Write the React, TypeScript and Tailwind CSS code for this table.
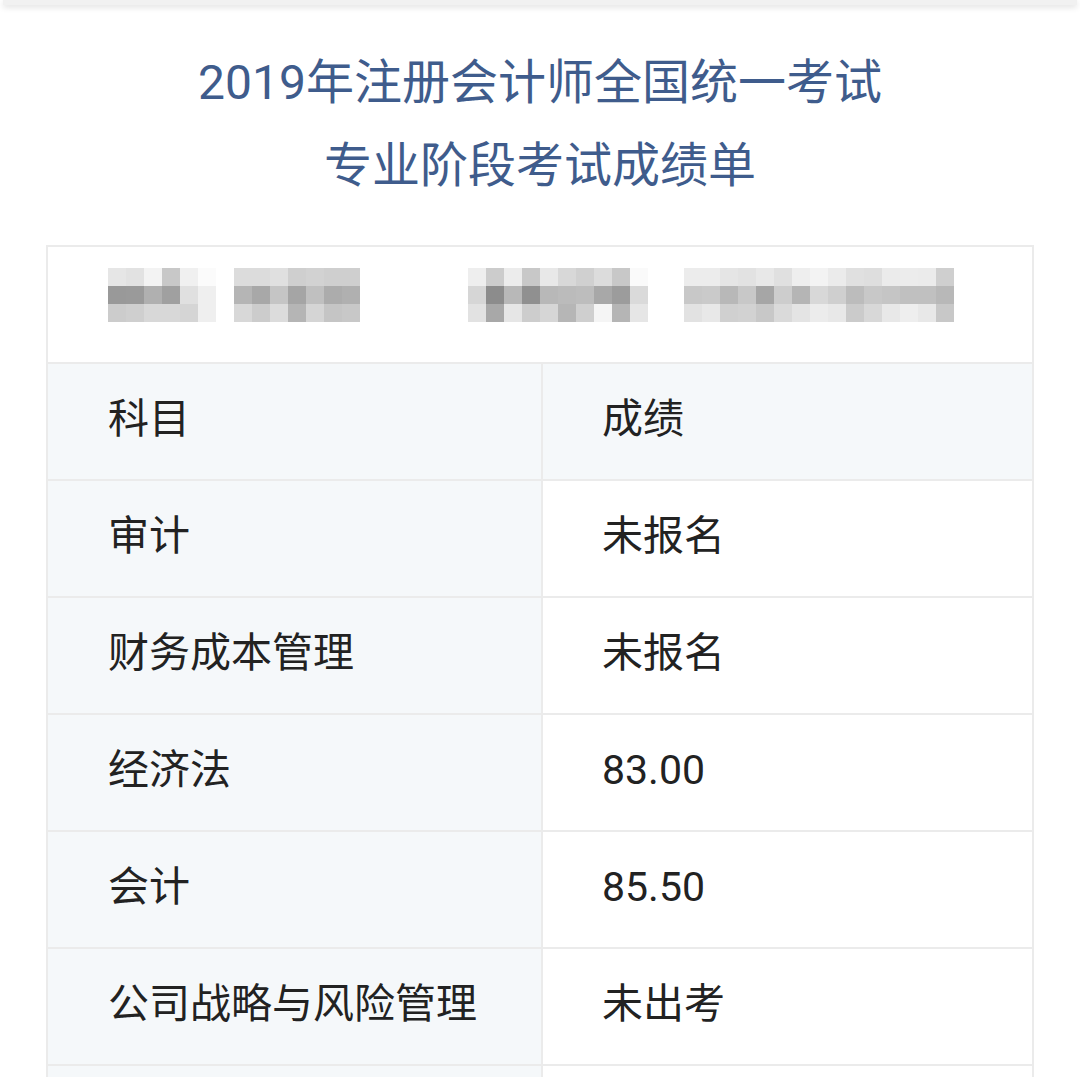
import React from "react";

const g1 = [
  ["#e6e6e6", "#e2e2e2", "#f3f3f3", "#c8c8c8", "#f0f0f0", "#fbfbfb"],
  ["#999999", "#9a9a9a", "#b0b0b0", "#a0a0a0", "#e0e0e0", "#efefef"],
  ["#cccccc", "#cfcfcf", "#d8d8d8", "#d8d8d8", "#d5d5d5", "#efefef"],
];
const g2 = [
  ["#dcdcdc", "#dcdcdc", "#e0e0e0", "#cfcfcf", "#d2d2d2", "#cfcfcf", "#cfcfcf"],
  ["#b5b5b5", "#a8a8a8", "#c5c5c5", "#a5a5a5", "#c0c0c0", "#acacac", "#b0b0b0"],
  ["#d8d8d8", "#cccccc", "#dcdcdc", "#b5b5b5", "#d5d5d5", "#c5c5c5", "#c8c8c8"],
];
const g3 = [
  ["#eeeeee", "#cccccc", "#ececec", "#c8c8c8", "#e8e8e8", "#d8d8d8", "#d0d0d0", "#dcdcdc", "#c8c8c8", "#fafafa"],
  ["#d6d6d6", "#8c8c8c", "#b8b8b8", "#909090", "#b8b8b8", "#bbbbbb", "#bdbdbd", "#a8a8a8", "#9c9c9c", "#dadada"],
  ["#e2e2e2", "#a8a8a8", "#e6e6e6", "#cdcdcd", "#d6d6d6", "#b6b6b6", "#cfcfcf", "#f5f5f5", "#b5b5b5", "#e6e6e6"],
];
const g4 = [
  ["#ececec", "#ececec", "#e5e5e5", "#e2e2e2", "#e8e8e8", "#e0e0e0", "#eeeeee", "#f3f3f3", "#ebebeb", "#e0e0e0", "#dedede", "#ebebeb", "#ececec", "#ebebeb", "#cfcfcf"],
  ["#c8c8c8", "#cacaca", "#b8b8b8", "#c8c8c8", "#a6a6a6", "#cdcdcd", "#b5b5b5", "#d8d8d8", "#cfcfcf", "#bcbcbc", "#c8c8c8", "#c5c5c5", "#c0c0c0", "#c0c0c0", "#b8b8b8"],
  ["#e2e2e2", "#e8e8e8", "#d0d0d0", "#d2d2d2", "#c8c8c8", "#dadada", "#e4e4e4", "#ececec", "#e8e8e8", "#cbcbcb", "#d8d8d8", "#e8e8e8", "#eeeeee", "#e8e8e8", "#c8c8c8"],
];

function Mosaic({ data, className }: { data: string[][]; className?: string }) {
  return (
    <div className={"flex flex-col " + (className ?? "")}>
      {data.map((row, i) => (
        <div key={i} className="flex">
          {row.map((c, j) => (
            <div key={j} className="w-[18px] h-[18px]" style={{ backgroundColor: c }} />
          ))}
        </div>
      ))}
    </div>
  );
}

const rows: [string, string][] = [
  ["审计", "未报名"],
  ["财务成本管理", "未报名"],
  ["经济法", "83.00"],
  ["会计", "85.50"],
  ["公司战略与风险管理", "未出考"],
  ["", ""],
];

export default function App() {
  return (
    <div
      className="min-h-[1077px] bg-white overflow-hidden"
      style={{ fontFamily: 'Roboto, "Noto Sans CJK SC", sans-serif' }}
    >
      <div className="mx-[3px] h-[5px] bg-[#f1f1f1] shadow-[0_2px_6px_rgba(0,0,0,0.14)]" />
      <div className="pt-[36px] text-center text-[48px] leading-[83px] text-[#3f5c8c]">
        <div>2019年注册会计师全国统一考试</div>
        <div>专业阶段考试成绩单</div>
      </div>
      <div className="mx-[46px] mt-[38px] border-2 border-b-0 border-[#ebebeb]">
        <div className="h-[117px] border-b-2 border-[#ebebeb] bg-white flex items-start pt-[21px]">
          <Mosaic data={g1} className="ml-[60px]" />
          <Mosaic data={g2} className="ml-[18px]" />
          <Mosaic data={g3} className="ml-[108px]" />
          <Mosaic data={g4} className="ml-[36px]" />
        </div>
        <div className="flex h-[117px] border-b-2 border-[#ebebeb] bg-[#f5f8fa] text-[41px] text-[#222222]">
          <div className="w-[495px] border-r-2 border-[#ebebeb] flex items-center pl-[60px] pb-[4px]">科目</div>
          <div className="flex-1 flex items-center pl-[59px] pb-[4px]">成绩</div>
        </div>
        {rows.map(([a, b], i) => (
          <div key={i} className="flex h-[117px] border-b-2 border-[#ebebeb] text-[41px] text-[#222222]">
            <div className="w-[495px] bg-[#f5f8fa] border-r-2 border-[#ebebeb] flex items-center pl-[60px] pb-[4px]">{a}</div>
            <div className="flex-1 bg-white flex items-center pl-[59px] pb-[4px]">{b}</div>
          </div>
        ))}
      </div>
    </div>
  );
}
